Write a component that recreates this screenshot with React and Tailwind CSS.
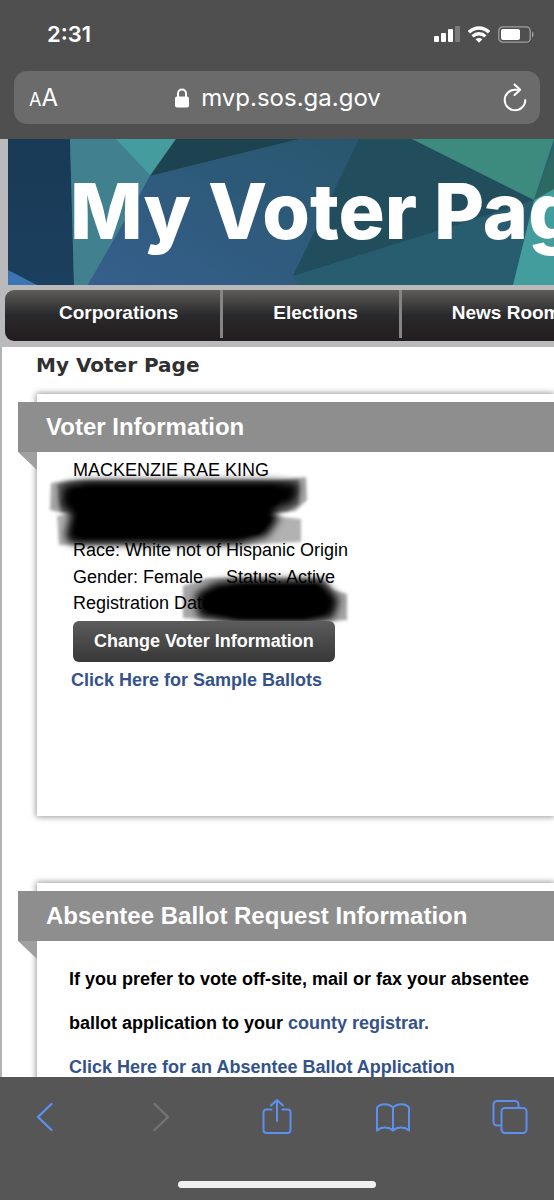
import React from "react";

const navLinks = [
  { label: "Corporations", className: "pl-[54px] pr-[42px] border-r-[3px]" },
  { label: "Elections", className: "pl-[50px] pr-[41px] border-r-[3px]" },
  { label: "News Room", className: "pl-[50px] pr-10" },
];

function StatusBar() {
  return (
    <div className="flex h-[71px] items-center justify-between pl-[47px] pr-[20px] pb-[3px]">
      <span className="text-[22px] leading-7 font-semibold">2:31</span>
      <div className="flex items-center gap-2">
        {/* Señal */}
        <svg width="26" height="16" viewBox="0 0 26 16" fill="#fff">
          <rect x="0" y="10" width="5" height="6" rx="1" />
          <rect x="7" y="7" width="5" height="9" rx="1" />
          <rect x="14" y="3" width="5" height="13" rx="1" />
          <rect x="21" y="0" width="5" height="16" rx="1" opacity="0.25" />
        </svg>
        {/* Wifi */}
        <svg width="22" height="17" viewBox="0 0 22 17" fill="none" stroke="#fff" strokeWidth="3.4">
          <path d="M1 6.2C6.8.6 15.2.6 21 6.2" />
          <path d="M4.600 10.400c3.600-3.500 9.200-3.500 12.800 0" />
          <path d="M7.600 13.300c2-1.700 4.800-1.700 6.800 0L11 16.800z" fill="#fff" stroke="none" />
        </svg>
        {/* Batería */}
        <svg width="36" height="17" viewBox="0 0 36 17" fill="none">
          <rect x=".8" y=".8" width="31.400" height="15.400" rx="4" stroke="#a0a0a0" strokeWidth="1.300" />
          <rect x="3" y="3" width="19" height="11" rx="2" fill="#fff" />
          <path d="M34 5.500c2 .8 2 5.200 0 6z" fill="#a0a0a0" />
        </svg>
      </div>
    </div>
  );
}

function AddressBar() {
  return (
    <div className="mx-[14px] flex h-[53px] items-center justify-between rounded-[13px] bg-[#6b6b6b] pl-[15px] pr-3">
      <button aria-label="Text size" className="flex items-baseline">
        <span className="text-[18px]">A</span>
        <span className="text-[24px]">A</span>
      </button>
      <div className="flex items-center gap-3 pr-1">
        <svg width="14" height="20" viewBox="0 0 14 20" fill="none">
          <rect x="0" y="8.500" width="14" height="11" rx="2" fill="#fff" />
          <path d="M3 9V5.500a4 4 0 0 1 8 0V9" stroke="#fff" strokeWidth="2" />
        </svg>
        <span className="text-[24px] leading-8">mvp.sos.ga.gov</span>
      </div>
      <button aria-label="Reload">
        <svg width="26" height="30" viewBox="0 0 26 30" fill="none" stroke="#fff" strokeWidth="2" strokeLinecap="round">
          <path d="M17.500 6.700H13A10.300 10.300 0 1 0 23.300 17" />
          <path d="M12.500 1.500L18.200 6.700L12.500 12" strokeLinejoin="round" />
        </svg>
      </button>
    </div>
  );
}

function Banner() {
  return (
    <div className="relative ml-[8px] h-[146px] overflow-hidden bg-[#2a6078]">
      <svg className="absolute left-0 top-0" width="546" height="146" viewBox="0 0 546 146">
        <defs>
          <linearGradient id="blue" x1="0" y1="1" x2="1" y2="0">
            <stop offset="0" stopColor="#365f8c" />
            <stop offset="1" stopColor="#28566d" />
          </linearGradient>
          <linearGradient id="navy" x1="0" y1="0" x2="0" y2="1">
            <stop offset="0" stopColor="#193a56" />
            <stop offset="1" stopColor="#1b3f5e" />
          </linearGradient>
        </defs>
        <rect width="546" height="146" fill="#2a5f75" />
        <path d="M0 0H62L66 146H0z" fill="url(#navy)" />
        <path d="M0 131L29 146H0z" fill="#3b76b3" />
        <path d="M62 0H168L143 37L80 146H66z" fill="#40808f" />
        <path d="M108 0H168L142 36z" fill="#449c9f" />
        <path d="M168 0H292L142 37z" fill="#1d4350" />
        <path d="M142 37L292 0H351L285 137L290 146H80z" fill="url(#blue)" />
        <path d="M351 0H404L526 61L516 77L285 137z" fill="#214d5d" />
        <path d="M285 137L435 90L526 61L505 146H290z" fill="#285d70" />
        <path d="M404 0H546L526 61z" fill="#3d8a7f" />
        <path d="M546 8V50L526 61z" fill="#2c6963" />
        <path d="M526 61L546 50V146H505z" fill="#429d9c" />
      </svg>
      <h1 className="relative whitespace-nowrap pl-[62px] pt-[25px] font-[Inter] text-[77px] leading-[94px] font-extrabold text-white">
        My Voter Page
      </h1>
    </div>
  );
}

function Panel({ title, children, className }) {
  return (
    <section className={`ml-[35px] bg-white pt-2 shadow-[0_0_6px_1px_rgba(0,0,0,0.4)] ${className}`}>
      <h3 className="relative -ml-[19px] h-[50px] whitespace-nowrap bg-[#8e8e8e] pl-7 text-[24px] leading-[49px] font-bold text-white">
        {title}
        <svg className="absolute left-0 top-full" width="19" height="18" viewBox="0 0 19 18">
          <path d="M0 0H19V18z" fill="#a0a0a0" />
        </svg>
      </h3>
      {children}
    </section>
  );
}

/* Trazos de marcador que tapan la dirección y la fecha */
function MarkerStrokes() {
  return (
    <svg className="absolute left-0 top-0" width="340" height="180" viewBox="0 0 340 180">
      <defs>
        <filter id="edge" x="-10%" y="-30%" width="120%" height="160%">
          <feGaussianBlur stdDeviation="1.500" />
        </filter>
        <filter id="core" x="-10%" y="-30%" width="120%" height="160%">
          <feGaussianBlur stdDeviation="4" />
        </filter>
      </defs>
      <g filter="url(#edge)" fill="#000">
        <path d="M14 31L32 28H240L269 25L270 48L258 59L230 62H30L13 58z" opacity=".35" />
        <path d="M20 32L40 29H238L262 28V52L250 60H24z" opacity=".35" />
        <path d="M20 64L40 60H200L264 67V90L200 93H22z" opacity=".3" />
        <path d="M146 134L170 126L200 126H285L296 138L310 142V168L280 170L200 169L146 166z" opacity=".35" />
      </g>
      <g filter="url(#core)" fill="#000">
        <path d="M26 34L50 29H238L262 32L258 50L236 58L242 66L230 84L202 92H36L28 86L34 60L24 54z" />
        <path d="M158 142L178 131L200 128H284L294 138L302 148L296 166L270 171H200L162 165z" />
      </g>
      <g filter="url(#edge)" fill="#050505">
        <path d="M36 38L60 35H236L246 40L240 52L224 58L234 68L222 82L196 86H46L38 78L42 58L34 50z" />
        <path d="M168 144L186 136L206 133H280L290 146L286 162L266 166H204L172 160z" />
      </g>
    </svg>
  );
}

function VoterInformation() {
  return (
    <Panel title="Voter Information" className="h-[422px]">
      <div className="relative pl-9 pt-[5px]">
        <div className="whitespace-nowrap text-[18px] leading-[27px] text-black">
          <p>MACKENZIE RAE KING</p>
          <p className="h-[26px]" />
          <p className="h-[27px]" />
          <p>Race: White not of Hispanic Origin</p>
          <p className="flex h-[26px] gap-[23px]">
            <span>Gender: Female</span>
            <span>Status: Active</span>
          </p>
          <p>Registration Date:</p>
        </div>
        <MarkerStrokes />
        <button className="relative mt-[4px] block h-[41px] rounded-[6px] bg-linear-to-b from-[#5c5c5c] to-[#383838] px-[21px] text-[18px] font-bold text-white">
          Change Voter Information
        </button>
        <a href="#" className="-ml-[2px] mt-[4px] inline-block text-[18px] leading-7 font-bold text-[#34528a]">
          Click Here for Sample Ballots
        </a>
      </div>
    </Panel>
  );
}

function AbsenteeBallot() {
  return (
    <Panel title="Absentee Ballot Request Information" className="mt-[67px] h-[422px]">
      <div className="pl-8 pt-4 text-[18px] leading-[44px] font-bold text-black">
        <p className="max-w-[470px]">
          If you prefer to vote off-site, mail or fax your absentee ballot application to your{" "}
          <a href="#" className="text-[#34528a]">county registrar.</a>
        </p>
        <a href="#" className="text-[#34528a]">Click Here for an Absentee Ballot Application</a>
      </div>
    </Panel>
  );
}

function Toolbar() {
  return (
    <footer className="shrink-0 bg-[#565656] pb-3">
      <div className="flex h-[104px] items-start justify-between pl-[36px] pr-[26px] pt-[22px]">
        <button aria-label="Back">
          <svg width="18" height="36" viewBox="0 0 18 36" fill="none" stroke="#5b90f0" strokeWidth="2.400" strokeLinecap="round" strokeLinejoin="round">
            <path d="M15.500 5L2 18L15.500 31" />
          </svg>
        </button>
        <button aria-label="Forward" className="pl-[28px]">
          <svg width="18" height="36" viewBox="0 0 18 36" fill="none" stroke="#747474" strokeWidth="2.400" strokeLinecap="round" strokeLinejoin="round">
            <path d="M2.500 5L16 18L2.500 31" />
          </svg>
        </button>
        <button aria-label="Share" className="pl-[22px]">
          <svg width="30" height="36" viewBox="0 0 30 36" fill="none" stroke="#5b90f0" strokeWidth="2" strokeLinecap="round" strokeLinejoin="round">
            <path d="M9.500 10.500H4.500A3 3 0 0 0 1.500 13.500V31A3 3 0 0 0 4.500 34H25.500A3 3 0 0 0 28.500 31V13.500A3 3 0 0 0 25.500 10.500H20.500" />
            <path d="M15 22V1.500M9 6.500L15 1L21 6.500" />
          </svg>
        </button>
        <button aria-label="Bookmarks" className="pl-[14px]">
          <svg width="34" height="36" viewBox="0 0 34 36" fill="none" stroke="#5b90f0" strokeWidth="2" strokeLinejoin="round">
            <path d="M17 8.500C13 4 4 4 1 8.500V31.500C5 27.500 13 27.500 17 31.500C21 27.500 29 27.500 33 31.500V8.500C30 4 21 4 17 8.500V31.500" />
          </svg>
        </button>
        <button aria-label="Tabs" className="pl-[12px]">
          <svg width="36" height="36" viewBox="0 0 36 36" fill="none" stroke="#5b90f0" strokeWidth="2" strokeLinejoin="round">
            <rect x="9.500" y="9" width="25" height="25" rx="3.500" />
            <path d="M9.500 26.500H5A3.500 3.500 0 0 1 1.500 23V5.500A3.500 3.500 0 0 1 5 2H23A3.500 3.500 0 0 1 26.500 5.500V9" />
          </svg>
        </button>
      </div>
      <div className="mx-auto h-[7px] w-[198px] rounded-full bg-[#f0f0f0]" />
    </footer>
  );
}

export default function App() {
  return (
    <div className="flex h-screen flex-col overflow-hidden bg-[#bababc] font-['Liberation_Sans',Arial,sans-serif]">
      <header className="shrink-0 bg-[#4f4f4f] pb-[15px] font-[Inter,sans-serif] text-white">
        <StatusBar />
        <AddressBar />
      </header>

      <main className="min-h-0 flex-1 overflow-hidden">
        <Banner />
        <nav className="ml-[5px] mt-[5px] flex h-[51px] overflow-hidden rounded-l-[9px] bg-linear-to-b from-[#5e5d5a] via-[#29292b] to-[#231c1e]">
          {navLinks.map((link) => (
            <a
              key={link.label}
              href="#"
              className={`h-[48px] shrink-0 border-[#858585] text-[19px] leading-[46px] font-bold text-white ${link.className}`}
            >
              {link.label}
            </a>
          ))}
        </nav>

        {/* Contenido */}
        <div className="mt-[6px] border-l-2 border-[#b4b4b6] bg-white">
          <h2 className="h-[47px] pl-[34px] font-['DejaVu_Sans',sans-serif] text-[20px] leading-[37px] font-bold text-[#303030]">
            My Voter Page
          </h2>
          <VoterInformation />
          <AbsenteeBallot />
        </div>
      </main>

      <Toolbar />
    </div>
  );
}
